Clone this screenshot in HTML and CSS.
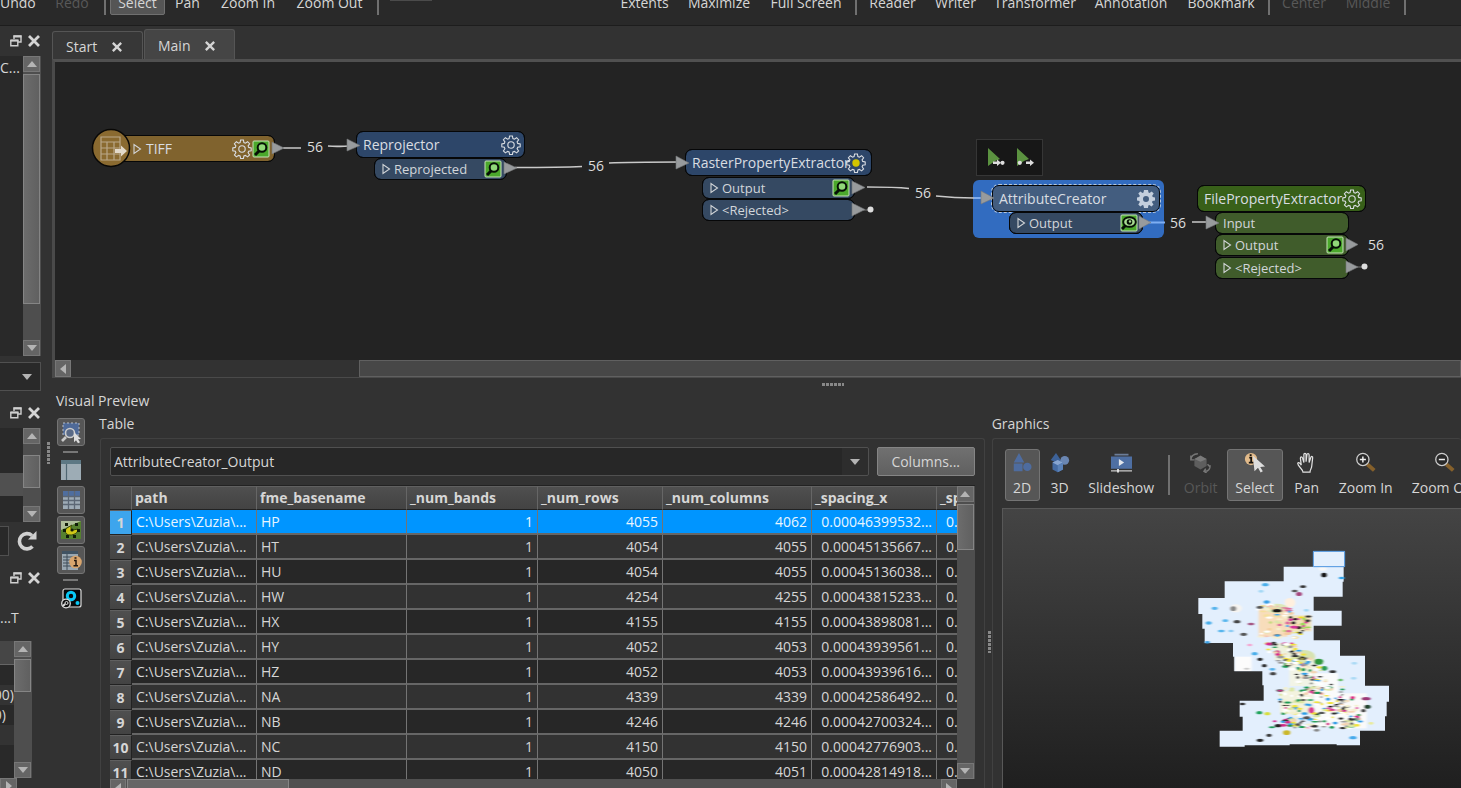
FILE: index.html
```html
<!DOCTYPE html>
<html lang="en">
<head>
<meta charset="utf-8">
<title>Workspace editor</title>
<link rel="stylesheet" href="styles.css">
</head>
<body>
<svg class="defs" aria-hidden="true">
  <defs>
    <symbol id="up" viewBox="0 0 10 6"><path d="M0 6 5 0l5 6z" fill="#b4b4b4"/></symbol>
    <symbol id="down" viewBox="0 0 10 6"><path d="M0 0h10L5 6z" fill="#b4b4b4"/></symbol>
    <symbol id="left" viewBox="0 0 6 10"><path d="M6 0v10L0 5z" fill="#b4b4b4"/></symbol>
    <symbol id="right" viewBox="0 0 6 10"><path d="M0 0v10l6-5z" fill="#b4b4b4"/></symbol>
    <symbol id="float" viewBox="0 0 12 12"><path d="M4 4V1h7v6H8" fill="none" stroke="#d0d0d0" stroke-width="1.400"/><path d="M3.500 1.500h8M.5 5.500h8" stroke="#d0d0d0" stroke-width="2"/><path d="M.8 5.500h7v5.200h-7z" fill="none" stroke="#d0d0d0" stroke-width="1.400"/></symbol>
    <symbol id="close" viewBox="0 0 12 12"><path d="m1 1 10 10M11 1 1 11" stroke="#d4d4d4" stroke-width="2.800"/></symbol>
    <symbol id="gear" viewBox="0 0 20 20"><path id="gearpath" d="M8.600 1h2.800l.5 2.600 1.500.6 2.200-1.500 2 2-1.500 2.200.6 1.500 2.500.5v2.800l-2.500.5-.6 1.500 1.500 2.200-2 2-2.200-1.500-1.500.6-.5 2.500H8.600l-.5-2.500-1.500-.6-2.200 1.500-2-2 1.500-2.200-.6-1.500-2.500-.5V8.900l2.500-.5.6-1.500-1.500-2.200 2-2 2.200 1.500 1.500-.6z" fill="none" stroke="currentColor" stroke-width="1.100"/><circle cx="10" cy="10" r="3.200" fill="none" stroke="currentColor" stroke-width="1.100"/></symbol>
    <symbol id="gearwarn" viewBox="0 0 20 20"><use href="#gearpath"/><circle cx="10" cy="10" r="3.700" fill="#d2c400"/></symbol>
    <symbol id="gearfull" viewBox="0 0 20 20"><path fill-rule="evenodd" fill="#c3cedd" d="M8 1h4l.5 2.500 1 .5 2.200-1.500 2 2-1.500 2.200.5 1.300L19 8.500v3l-2.500.5-.5 1.300 1.500 2.200-2 2-2.200-1.500-1 .5L12 19H8l-.5-2.500-1-.5-2.200 1.500-2-2L3.800 13l-.5-1L1 11.500v-3L3.300 8l.5-1.300L2.300 4.500l2-2L6.500 4l1-.5zM10 7a3 3 0 1 0 0 6 3 3 0 0 0 0-6"/></symbol>
    <symbol id="probe" viewBox="0 0 18 18"><rect x="1" y="1" width="16" height="16" rx="1" fill="#4ba82c" stroke="#c7e3b9"/><path d="M7.500 10.500 3 15" stroke="#061006" stroke-width="3"/><circle cx="10" cy="7.500" r="4.300" fill="#90d878" stroke="#061006" stroke-width="2"/></symbol>
    <symbol id="eye" viewBox="0 0 18 18"><rect x="1" y="1" width="16" height="16" rx="1" fill="#4ba82c" stroke="#c7e3b9"/><path d="m6 11-4 4" stroke="#061006" stroke-width="3"/><ellipse cx="9.500" cy="8" rx="6.300" ry="4.800" fill="#a8dd93" stroke="#061006" stroke-width="1.900"/><circle cx="9.500" cy="8" r="2.800" fill="#061006"/><circle cx="10" cy="7.500" r="1.200" fill="#a8dd93"/></symbol>
    <symbol id="expand" viewBox="0 0 9 12"><path d="M1 1.500v9L7.500 6z" fill="none" stroke="#d2d5d8" stroke-width="1.100"/></symbol>
  </defs>
</svg>

<nav class="topbar" aria-label="Main toolbar">
  <button>Undo</button><button disabled>Redo</button><i class="sep"></i>
  <button class="on">Select</button><button>Pan</button><button>Zoom In</button><button>Zoom Out</button><i class="sep"></i>
  <span class="stub"></span>
  <button>Extents</button><button>Maximize</button><button>Full Screen</button><i class="sep"></i>
  <button>Reader</button><button>Writer</button><button>Transformer</button><button>Annotation</button><button>Bookmark</button><i class="sep"></i>
  <button disabled>Center</button><button disabled>Middle</button><i class="sep"></i>
</nav>

<div class="shell">
  <aside class="dock">
    <div class="dockhead"><button aria-label="Float"><svg><use href="#float"/></svg></button><button aria-label="Close"><svg><use href="#close"/></svg></button></div>
    <div class="pane tree">
      <div class="panetext">C...</div>
      <div class="vbar"><button aria-label="Up"><svg><use href="#up"/></svg></button><div class="track"><i class="thumb tall"></i></div><button aria-label="Down"><svg><use href="#down"/></svg></button></div>
    </div>
    <button class="dockcombo" aria-label="Filter"><svg><use href="#down"/></svg></button>
    <div class="dockhead"><button aria-label="Float"><svg><use href="#float"/></svg></button><button aria-label="Close"><svg><use href="#close"/></svg></button></div>
    <div class="pane list">
      <div class="panetext"><i class="picked"></i></div>
      <div class="vbar"><button aria-label="Up"><svg><use href="#up"/></svg></button><div class="track lower"><i class="thumb short"></i></div><button aria-label="Down"><svg><use href="#down"/></svg></button></div>
    </div>
    <div class="search"><input aria-label="Search"><button aria-label="Refresh"><svg viewBox="0 0 22 22"><path d="M16.500 16.500A7.600 7.600 0 1 1 16 5.500" fill="none" stroke="#d0d0d0" stroke-width="3.600"/><path d="M20.500 1v8.500H12z" fill="#d0d0d0"/></svg></button></div>
    <div class="dockhead"><button aria-label="Float"><svg><use href="#float"/></svg></button><button aria-label="Close"><svg><use href="#close"/></svg></button></div>
    <div class="docklabel">...T</div>
    <div class="pane values">
      <div class="panetext"><b></b><span></span><span>00)</span><span class="inset">0)</span><span></span><span></span></div>
      <div class="vbar"><button aria-label="Up"><svg><use href="#up"/></svg></button><div class="track"><i class="thumb short"></i></div><button aria-label="Down"><svg><use href="#down"/></svg></button></div>
    </div>
    <div class="dockfoot"><button aria-label="Right"><svg><use href="#right"/></svg></button></div>
  </aside>
  <div class="vgrip"></div>

  <main class="work">
    <div class="tabs">
      <div class="tab"><button>Start</button><button class="x" aria-label="Close Start"><svg><use href="#close"/></svg></button></div>
      <div class="tab current"><button>Main</button><button class="x" aria-label="Close Main"><svg><use href="#close"/></svg></button></div>
    </div>
    <section class="editor">
      <div class="canvas">
        <div class="glow"></div>
        <svg class="wires" viewBox="0 0 1406 298" width="1406" height="298">
          <g fill="none" stroke="#c9c9c9" stroke-width="1.600">
            <path d="M228 86h18M273 84c10 1 16 0 22 0M460 105.500c30 0 46 0 67-1M554 101c20-1 45-1 70-1M812 125c16 0 28 0 42 1.500M881 134c14 1.500 28 2 38 2M1137 160h16"/>
          </g>
          <path d="M919 136h13M1094 160.500h16" stroke="#7eaef2" stroke-width="2"/>
          <path d="M808 148h9M1300 205h9" stroke="#777"/>
          <circle cx="815.500" cy="147.500" r="3" fill="#ddd"/><circle cx="1309.500" cy="204.500" r="3" fill="#ddd"/>
        </svg>
        <span class="count c1">56</span><span class="count c2">56</span><span class="count c3">56</span><span class="count c4">56</span><span class="count c5">56</span>

        <div class="node reader n1"><svg class="exp"><use href="#expand"/></svg><span>TIFF</span><button class="gear" aria-label="TIFF parameters"><svg><use href="#gear"/></svg></button><button class="probe" aria-label="Inspect"><svg><use href="#probe"/></svg></button></div>
        <svg class="disc" viewBox="0 0 40 40"><circle cx="20" cy="20" r="18.500" fill="#8a6a30" stroke="#090806" stroke-width="1.500"/><g fill="none" stroke="#b9a789" stroke-width="1.200"><path d="M10 9h19v23H10zM10 14h19M10 20h19M10 26h19M16 14v18M23 14v18"/></g><path d="M24 21h6v-3.500l6 5.500-6 5.500V25h-6z" fill="#e2d9ca"/></svg>

        <div class="node blue n2"><span>Reprojector</span><button class="gear" aria-label="Parameters"><svg><use href="#gear"/></svg></button></div>
        <div class="port blue p2"><svg class="exp"><use href="#expand"/></svg><span>Reprojected</span><button class="probe" aria-label="Inspect"><svg><use href="#probe"/></svg></button></div>

        <div class="node blue n3"><span>RasterPropertyExtractor</span><button class="gear" aria-label="Parameters"><svg><use href="#gearwarn"/></svg></button></div>
        <div class="port blue p3"><svg class="exp"><use href="#expand"/></svg><span>Output</span><button class="probe" aria-label="Inspect"><svg><use href="#probe"/></svg></button></div>
        <div class="port blue p3b"><svg class="exp"><use href="#expand"/></svg><span>&lt;Rejected&gt;</span></div>

        <div class="minibar">
          <button aria-label="Run to this"><svg viewBox="0 0 20 20"><path d="M1 0 13 11 8 13l-7 5z" fill="#5b9240"/><path d="M6 13.500h4v-2l4 3.300-4 3.200v-2H6z" fill="#ddd"/><circle cx="15.500" cy="14.800" r="2.100" fill="#ddd"/></svg></button>
          <button aria-label="Run from this"><svg viewBox="0 0 20 20"><path d="M1 0 13 11 8 13l-7 5z" fill="#5b9240"/><path d="M10 13.500h4v-2l4 3.300-4 3.200v-2h-4z" fill="#ddd"/><circle cx="3.800" cy="14.800" r="2.100" fill="#ddd"/></svg></button>
        </div>
        <div class="node chosen n4"><span>AttributeCreator</span><button class="gear" aria-label="Parameters"><svg><use href="#gearfull"/></svg></button></div>
        <div class="port blue p4"><svg class="exp"><use href="#expand"/></svg><span>Output</span><button class="probe" aria-label="Inspect"><svg><use href="#eye"/></svg></button></div>

        <div class="node green n5"><span>FilePropertyExtractor</span><button class="gear" aria-label="Parameters"><svg><use href="#gear"/></svg></button></div>
        <div class="port green p5"><span>Input</span></div>
        <div class="port green p5b"><svg class="exp"><use href="#expand"/></svg><span>Output</span><button class="probe" aria-label="Inspect"><svg><use href="#probe"/></svg></button></div>
        <div class="port green p5c"><svg class="exp"><use href="#expand"/></svg><span>&lt;Rejected&gt;</span></div>

        <svg class="wires" viewBox="0 0 1406 298" width="1406" height="298">
          <path fill="#989b9d" stroke="#77797b" stroke-width=".6" d="M217 80v12l12-6zM292 77v12l13-5.500zM449 100v12l13-6zM621 94v13l13-6zM797 119v13l13-6.500zM797 141v13l13-6.500zM926 129v13l13-6zM1084 154v13l12-6.500zM1151 154v13l13-6zM1291 176v13l12-6.500zM1291 199v12l12-6z"/>
        </svg>
      </div>
      <div class="hbar"><button aria-label="Left"><svg><use href="#left"/></svg></button><div class="track"><i></i></div></div>
    </section>
    <div class="hgrip"></div>

    <section class="preview">
      <h2>Visual Preview</h2>
      <div class="split">
        <div class="strip">
          <button class="on" aria-label="Inspect selection"><svg viewBox="0 0 24 24"><path d="M4 3h16v12H4z" fill="#4f6a98"/><path d="M4 3h16v12H4z" fill="none" stroke="#b7bdc6" stroke-dasharray="2 2"/><path d="m7 17-4 4" stroke="#c9c9c9" stroke-width="2.600"/><circle cx="11" cy="13" r="4.500" fill="#5a6a86" stroke="#ccc" stroke-width="1.600"/><path d="m15 12 7 7-3 .2 2 3-2 1-2-3-2 2z" fill="#ddd"/></svg></button>
          <i class="dash"></i>
          <button aria-label="Layout"><svg viewBox="0 0 24 24"><path d="M2 2h20v20H2z" fill="#9dacb5"/><path d="M2 2h20v4H2z" fill="#5d7884"/><path d="M7.500 6v16" stroke="#4f6672" stroke-width="1.200"/></svg></button>
          <button class="on" aria-label="Table view"><svg viewBox="0 0 24 24"><path d="M4 3h17v18H4z" fill="#9eabb6"/><path d="M4 3h17v5H4z" fill="#4f6e9f"/><path d="M4 8.500h17M4 12.500h17M4 16.500h17M9.500 3v18M15.500 3v18" stroke="#5c6775" stroke-width="1.300"/></svg></button>
          <button class="on" aria-label="Graphics view"><svg viewBox="0 0 24 24"><path d="M2 3h20v18H2z" fill="#55802f"/><path d="M2 3h20L2 12z" fill="#aebd9b"/><path d="M13 7c-2 2-1 5 1 5l5-1c0 4-4 6-8 6-5 0-6-5-3-7z" fill="#d0c818" stroke="#39470c"/><circle cx="13" cy="12" r="1.600" fill="#101c09"/><path d="M6 5h3v3H6zM16 5h3v3h-3zM4 11h3v3H4zM18 11h3v3h-3zM7 17h3v3H7zM14 17h3v3h-3z" fill="#101c09"/></svg></button>
          <button class="on" aria-label="Feature information"><svg viewBox="0 0 24 24"><path d="M3 3h16v19H3z" fill="#9aa8b2"/><path d="M3 3h16v3H3z" fill="#405363"/><path d="M4 9h14M4 12h14M4 15h14M4 18h14M8 6v16" stroke="#3e4d58"/><circle cx="16.500" cy="14" r="6.300" fill="#d9a66e"/><path d="M15 12.500h2v5M14.500 17.800h4.500M15.500 10h2" stroke="#231811" stroke-width="1.500" fill="none"/></svg></button>
          <i class="dash"></i>
          <button aria-label="Data Inspector"><svg viewBox="0 0 24 24"><rect x="4" y="3" width="18" height="18" rx="2" fill="#07090a" stroke="#ddd" stroke-width="1.200"/><circle cx="12" cy="10" r="3.700" fill="none" stroke="#08c8f5" stroke-width="3"/><circle cx="18.500" cy="17" r="2" fill="#08c8f5"/><circle cx="7" cy="17.500" r="4.300" fill="#111" stroke="#ddd" stroke-width="1.300"/><path d="m4 20 2-2" stroke="#ddd" stroke-width="2"/><circle cx="7.500" cy="17" r="1.500" fill="none" stroke="#ddd"/></svg></button>
        </div>

        <section class="group tablegroup">
          <h3>Table</h3>
          <div class="frame">
            <div class="picker">
              <div class="combo"><select aria-label="Table source"><option>AttributeCreator_Output</option></select><svg><use href="#down"/></svg></div>
              <button class="push">Columns...</button>
            </div>
            <div class="gridwrap">
              <div class="clip">
              <table>
                <colgroup><col class="k0"><col class="k1"><col class="k2"><col class="k3"><col class="k4"><col class="k5"><col class="k6"><col class="k7"></colgroup>
                <thead><tr><th></th><th>path</th><th>fme_basename</th><th>_num_bands</th><th>_num_rows</th><th>_num_columns</th><th>_spacing_x</th><th>_spacing_y</th></tr></thead>
                <tbody>
                <tr class="sel"><th>1</th><td>C:\Users\Zuzia\...</td><td>HP</td><td>1</td><td>4055</td><td>4062</td><td>0.00046399532...</td><td>0.</td></tr>
                <tr><th>2</th><td>C:\Users\Zuzia\...</td><td>HT</td><td>1</td><td>4054</td><td>4055</td><td>0.00045135667...</td><td>0.</td></tr>
                <tr><th>3</th><td>C:\Users\Zuzia\...</td><td>HU</td><td>1</td><td>4054</td><td>4055</td><td>0.00045136038...</td><td>0.</td></tr>
                <tr><th>4</th><td>C:\Users\Zuzia\...</td><td>HW</td><td>1</td><td>4254</td><td>4255</td><td>0.00043815233...</td><td>0.</td></tr>
                <tr><th>5</th><td>C:\Users\Zuzia\...</td><td>HX</td><td>1</td><td>4155</td><td>4155</td><td>0.00043898081...</td><td>0.</td></tr>
                <tr><th>6</th><td>C:\Users\Zuzia\...</td><td>HY</td><td>1</td><td>4052</td><td>4053</td><td>0.00043939561...</td><td>0.</td></tr>
                <tr><th>7</th><td>C:\Users\Zuzia\...</td><td>HZ</td><td>1</td><td>4052</td><td>4053</td><td>0.00043939616...</td><td>0.</td></tr>
                <tr><th>8</th><td>C:\Users\Zuzia\...</td><td>NA</td><td>1</td><td>4339</td><td>4339</td><td>0.00042586492...</td><td>0.</td></tr>
                <tr><th>9</th><td>C:\Users\Zuzia\...</td><td>NB</td><td>1</td><td>4246</td><td>4246</td><td>0.00042700324...</td><td>0.</td></tr>
                <tr><th>10</th><td>C:\Users\Zuzia\...</td><td>NC</td><td>1</td><td>4150</td><td>4150</td><td>0.00042776903...</td><td>0.</td></tr>
                <tr><th>11</th><td>C:\Users\Zuzia\...</td><td>ND</td><td>1</td><td>4050</td><td>4051</td><td>0.00042814918...</td><td>0.</td></tr>
                </tbody>
              </table>
              </div>
              <div class="vbar"><button aria-label="Up"><svg><use href="#up"/></svg></button><div class="track"><i class="thumb mid"></i></div><button aria-label="Down"><svg><use href="#down"/></svg></button></div>
            </div>
            <div class="hbar low"><button aria-label="Left"><svg><use href="#left"/></svg></button><div class="track"><i></i></div><button aria-label="Right"><svg><use href="#right"/></svg></button></div>
          </div>
        </section>
        <div class="vgrip between"></div>

        <section class="group graphics">
          <h3>Graphics</h3>
          <div class="frame">
            <div class="gtools">
              <button class="on"><svg viewBox="0 0 24 24"><path d="M8 1 14 12H2zM2 13h10v9H2z" fill="#4e6c9f"/><circle cx="17.500" cy="17" r="4.800" fill="#4e6c9f"/></svg><span>2D</span></button>
              <button><svg viewBox="0 0 24 24"><path d="m8 1 6 9-6 2-6-3z" fill="#3d6299"/><circle cx="18" cy="9.500" r="5" fill="#6a86b2"/><path d="m4 12 6-3 6 3v8l-6 3-6-3z" fill="#456ba3"/><path d="m4 12 6 3 6-3-6-3z" fill="#88a5d0"/><path d="M10 15v8l6-3v-8z" fill="#5b82b8"/></svg><span>3D</span></button>
              <button><svg viewBox="0 0 24 24"><path d="M4 2h16v2H4z" fill="#6b7d99"/><path d="M0 5h24v14H0z" fill="#4e6fa3"/><path d="m9 8 6 4-6 4z" fill="#e2e6ec"/><path d="M0 21.500h24" stroke="#ccc" stroke-width="1.400"/><path d="M7 19.500h2v4H7z" fill="#eee"/></svg><span>Slideshow</span></button>
              <i class="sep"></i>
              <button disabled><svg viewBox="0 0 24 24"><path d="m12 5 7 3v8l-7 4-7-4V8z" fill="#5e5e5e"/><path d="m5 8 7 3 7-3-7-4z" fill="#7b7b7b"/><path d="M1 9c0-4 3-7 8-7M1 4v5h4M23 15c0 4-2 7-6 7M23 17l-3-3M18 19l-2 3 3 2" fill="none" stroke="#777" stroke-width="1.700"/></svg><span>Orbit</span></button>
              <button class="on"><svg viewBox="0 0 24 24"><circle cx="8" cy="8" r="7" fill="#e1ba8a"/><path d="M6 6.500h2.200v5.500M5.500 12.200h5.500M6.500 3.500h2.200" stroke="#15110d" stroke-width="2" fill="none"/><path d="m10 4 14 12.500-5.500.5 3 5-2.500 1.500-3-5.500-4 4z" fill="#ddd"/></svg><span>Select</span></button>
              <button><svg viewBox="0 0 24 24"><path d="M8 23c0-3-6-7-6-10 1-2 3 0 4 2L5 7c0-2 2-2 2.500 0L9 12V3c0-2 2.500-2 2.500 0v8l1-8c.5-2 2.500-1.500 2.500.5V12l2-6c.5-1.500 2.500-1 2 1l-1 9c0 3-2 4-2 7z" fill="#353535" stroke="#e1e1e1" stroke-width="1.400"/></svg><span>Pan</span></button>
              <button><svg viewBox="0 0 24 24"><path d="m14 14 8 7" stroke="#85602b" stroke-width="4.500"/><circle cx="9" cy="8.500" r="7" fill="#292929" stroke="#ccc" stroke-width="1.500"/><path d="M5.500 8.500h7M9 5v7" stroke="#eee" stroke-width="1.700"/></svg><span>Zoom In</span></button>
              <button><svg viewBox="0 0 24 24"><path d="m14 14 8 7" stroke="#85602b" stroke-width="4.500"/><circle cx="9" cy="8.500" r="7" fill="#292929" stroke="#ccc" stroke-width="1.500"/><path d="M5.500 8.500h7" stroke="#eee" stroke-width="1.700"/></svg><span>Zoom Out</span></button>
            </div>
            <div class="view">
              <svg class="map" viewBox="0 0 690 660" role="img" aria-label="Raster tiles of Great Britain">
                <defs><filter id="soft"><feGaussianBlur stdDeviation="2.800 1.600"/></filter></defs>
                <path d="M399 34h95v46h-3v45h-3v45h-87v42h84v45h-84v44h79v46h75v90h72v48h-7v44h-5v43h-75v44h-70v-3H329v3H194v4h-75v-48h69v-42h-9v-48h72v-46h-4v-42h-84v-44h-4v-41H74v-43h-7v-44H55v-48h79v-50h177V80h88z" fill="#e3effd"/>
                <g id="spots" filter="url(#soft)"></g>
                <path d="M400 34h94v46h-94z" fill="#e3effd" stroke="#4b93df" stroke-width="3"/>
              </svg>
            </div>
          </div>
        </section>
      </div>
    </section>
  </main>
</div>
<script src="map.js"></script>
</body>
</html>
```
FILE: styles.css
```css
* { box-sizing: border-box; }
html, body { height: 100%; }
body { margin: 0; overflow: hidden; display: flex; flex-direction: column; background: #323232; color: #d6d6d6; font: 14px/20px "Open Sans", "Noto Sans", sans-serif; }
button, input, select { font: inherit; color: inherit; background: none; border: 0; padding: 0; margin: 0; }
button { white-space: nowrap; }
svg { display: block; }
h2, h3 { font-size: 14px; font-weight: 400; line-height: 20px; margin: 0; }
.defs { position: absolute; width: 0; height: 0; }

.topbar { flex: none; height: 26px; overflow: hidden; display: grid; grid-template-columns: 45px 54px 11px 55px 45px 76px 87px 10px 228px 67px 82px 92px 8px 65px 61px 98px 94px 86px 9px 62px 66px 8px; grid-template-rows: 15px; align-items: end; background: #292929; border-bottom: 1px solid #1d1d1d; }
.topbar button { height: 24px; line-height: 20px; padding-bottom: 2px; display: flex; justify-content: center; align-items: flex-end; }
.topbar button:first-child { justify-content: flex-start; }
.topbar button:disabled, .gtools button:disabled { color: #585858; }
.topbar .on { background: #555; border: 1px solid #707070; border-radius: 2px; padding-bottom: 1px; }
.sep { justify-self: center; width: 2px; height: 40px; background: #707070; }
.stub { align-self: start; width: 42px; height: 1px; margin-left: 7px; background: #4b4b4b; }

.shell { flex: 1; min-height: 0; display: flex; }
.dock { flex: none; width: 41px; display: flex; flex-direction: column; overflow: hidden; }
.dockhead { height: 30px; flex: none; display: flex; align-items: center; justify-content: flex-end; gap: 6px; padding-right: 1px; }
.dockhead svg { width: 12px; height: 12px; }
.pane { flex: none; display: flex; background: #292929; }
.panetext { flex: 1; min-width: 0; overflow: hidden; white-space: nowrap; }
.tree { height: 300px; }
.tree .panetext { padding-top: 2px; }
.list { height: 94px; margin-bottom: 4px; }
.picked { display: block; height: 23px; margin-top: 45px; background: #505050; }
.vbar { flex: none; width: 18px; display: flex; flex-direction: column; background: #4e4e4e; }
.vbar button, .hbar button, .dockfoot button { flex: none; width: 17px; height: 16px; display: grid; place-items: center; background: #656565; border: 1px solid #777; }
.vbar svg, .dockcombo svg, .combo svg { width: 10px; height: 6px; }
.track { flex: 1; min-width: 0; min-height: 0; }
.vbar .track { padding-top: 2px; }
.vbar .lower { padding-top: 11px; }
.thumb { display: block; width: 17px; border: 1px solid #858585; background: linear-gradient(90deg, #6c6c6c, #606060); }
.tall { height: 230px; }
.short { height: 33px; }
.mid { height: 46px; }
.dockcombo { flex: none; height: 29px; margin: 6px 0 7px; padding-right: 8px; display: flex; align-items: center; justify-content: flex-end; background: #292929; border: 1px solid #505050; border-left: 0; }
.search { flex: none; display: flex; gap: 7px; height: 30px; margin-bottom: 7px; }
.search input { width: 9px; border: 1px solid #505050; border-left: 0; background: #292929; }
.search svg { width: 22px; height: 22px; }
.docklabel { flex: none; height: 48px; padding-top: 15px; }
.values { height: 137px; width: 32px; }
.values .panetext b { display: block; height: 24px; background: #464646; border-bottom: 1px solid #666; }
.values .panetext span { display: flex; justify-content: flex-end; height: 20px; }
.values .panetext span:nth-of-type(even) { background: #333; }
.values .panetext .inset { padding-right: 8px; }
.dockfoot { flex: 1; }
.dockfoot svg, .hbar svg { width: 6px; height: 10px; }
.vgrip { flex: none; width: 11px; padding: 416px 4px 0 6px; }
.vgrip::before, .hgrip::before { content: ""; display: block; width: 3px; height: 22px; background: repeating-linear-gradient(#888 0 3px, #323232 3px 4px); }

.work { flex: 1; min-width: 0; display: flex; flex-direction: column; }
.tabs { flex: none; height: 33px; display: flex; align-items: flex-end; gap: 1px; }
.tab { height: 28px; width: 91px; display: flex; align-items: center; justify-content: space-between; padding: 2px 20px 0 13px; border: 1px solid #555; border-bottom: 0; border-radius: 3px 3px 0 0; background: #373737; }
.current { height: 30px; background: #454545; padding-right: 19px; }
.tab svg { width: 10px; height: 10px; }
.editor { flex: none; overflow: hidden; border: 3px solid #4a4a4a; border-top-color: #505050; border-right: 0; border-bottom: 1px solid #4a4a4a; }
.canvas { position: relative; height: 298px; overflow: hidden; background: #232323; }
.wires { position: absolute; left: 0; top: 0; pointer-events: none; }
.hbar { display: flex; height: 17px; background: #323232; }
.hbar button { width: 16px; height: 17px; }
.hbar .track { padding-left: 288px; }
.hbar .track i { display: block; height: 17px; background: #474747; border: 1px solid #606060; }
.hgrip { flex: none; height: 13px; display: flex; justify-content: center; padding: 5px 0 0 153px; }
.hgrip::before { width: 22px; height: 3px; background: repeating-linear-gradient(90deg, #888 0 3px, #323232 3px 4px); }

.node, .port { position: absolute; display: flex; align-items: center; gap: 5px; border: 1px solid #060708; outline: 1px solid #060708; outline-offset: -1px; color: #d9dde2; white-space: nowrap; }
.node { height: 27px; border-radius: 7px; padding: 0 3px 0 6px; }
.port { height: 22px; border-radius: 7px; padding: 0 4px 0 7px; gap: 3px; font-size: 13px; color: #d2d6da; }
.node span, .port span { flex: 1; min-width: 0; }
.node.blue { background: #2d4669; }
.port.blue { background: #354962; }
.node.green { background: #386019; }
.port.green { background: #405c2b; }
.reader { background: #80632e; }
.chosen { background: #435d7f; outline: 1px dashed #b7c7da; outline-offset: 0; }
.exp { width: 9px; height: 12px; }
.gear svg { width: 20px; height: 20px; }
.probe svg { width: 18px; height: 18px; }
.disc { position: absolute; left: 36px; top: 66px; width: 40px; height: 40px; }
.n1 { left: 60px; top: 73px; width: 160px; padding-left: 17px; padding-right: 4px; gap: 4px; }
.n1 .gear { margin-right: -4px; }
.n2 { left: 301px; top: 69px; width: 169px; }
.p2 { left: 319px; top: 96px; width: 133px; }
.n3 { left: 630px; top: 87px; width: 187px; gap: 0; }
.p3, .p3b { left: 647px; width: 153px; }
.p3 { top: 115px; }
.p3b { top: 137px; }
.glow { position: absolute; left: 918px; top: 118px; width: 191px; height: 58px; border-radius: 6px; background: #326cc0; }
.n4 { left: 937px; top: 123px; width: 168px; }
.p4 { left: 954px; top: 150px; width: 134px; }
.n5 { left: 1142px; top: 123px; width: 169px; gap: 0; }
.p5, .p5b, .p5c { left: 1160px; width: 134px; }
.p5 { top: 150px; }
.p5b { top: 172px; }
.p5c { top: 195px; }
.n3 { padding-right: 5px; }
.count { position: absolute; line-height: 20px; color: #ddd; }
.c1 { left: 252px; top: 75px; }
.c2 { left: 533px; top: 94px; }
.c3 { left: 860px; top: 121px; }
.c4 { left: 1115px; top: 151px; }
.c5 { left: 1313px; top: 173px; }
.minibar { position: absolute; left: 921px; top: 77px; width: 67px; height: 37px; display: flex; align-items: center; gap: 9px; padding-left: 10px; background: #171717; border: 1px solid #363636; }
.minibar svg { width: 20px; height: 20px; }

.preview { flex: 1; min-height: 0; display: flex; flex-direction: column; }
.preview h2 { padding-left: 4px; }
.split { flex: 1; min-height: 0; display: flex; }
.strip { flex: none; width: 47px; padding: 7px 0 0 5px; display: flex; flex-direction: column; gap: 2px; }
.strip button { flex: none; width: 28px; height: 28px; display: grid; place-items: center; border: 1px solid transparent; border-radius: 3px; }
.strip .on, .gtools .on { background: #565656; border-color: #747474; }
.strip svg { width: 24px; height: 24px; }
.dash { width: 15px; height: 2px; margin: 3px 0 1px 6px; background: #777; }
.group { min-width: 0; display: flex; flex-direction: column; }
.group h3 { height: 27px; padding-top: 3px; }
.group .frame { flex: 1; min-height: 0; display: flex; flex-direction: column; border: 1px solid #414141; border-bottom: 0; border-radius: 3px 3px 0 0; }
.tablegroup { flex: 1774; flex-basis: 0; }
.tablegroup .frame { margin-left: 1px; padding: 8px 9px 0; }
.picker { flex: none; display: flex; gap: 8px; margin-bottom: 9px; }
.combo { flex: 1; position: relative; display: flex; }
.combo select { appearance: none; width: 100%; height: 29px; padding-left: 3px; background: linear-gradient(90deg, #272727 calc(100% - 26px), #2d2d2d 0); border: 1px solid #505050; border-radius: 2px; }
.combo svg { position: absolute; right: 9px; top: 12px; pointer-events: none; }
.push { width: 98px; height: 29px; border: 1px solid #858585; border-radius: 2px; background: linear-gradient(#707070, #606060); }
.gridwrap { flex: 1; min-height: 0; display: flex; border-top: 1px solid #222; }
.clip { flex: 1; min-width: 0; overflow: hidden; }
table { width: 952px; table-layout: fixed; border-collapse: separate; border-spacing: 0; }
.k0 { width: 22px; } .k1, .k4, .k6, .k7 { width: 125px; } .k2 { width: 150px; } .k3 { width: 131px; } .k5 { width: 149px; }
th, td { height: 25px; padding: 0 4px 2px; line-height: 20px; text-align: left; white-space: nowrap; overflow: hidden; }
td { border-right: 1px solid #747474; border-bottom: 2px solid #666; padding-bottom: 0; }
th { background: linear-gradient(#4f4f4f, #434343); border-right: 1px solid #666; border-top: 1px solid #606060; border-bottom: 1px solid #222; }
thead th { height: 24px; padding: 0 3px; }
tbody th { padding: 0; text-align: center; border-right-color: #222; }
tbody td { background: #323232; }
tbody tr:nth-child(odd) td { background: #272727; }
td:nth-child(n+4) { text-align: right; }
td:nth-child(8) { text-align: left; padding-left: 9px; }
tbody .sel td, tbody tr.sel:nth-child(odd) td { background: #0095ff; color: #e8f5ff; }
.sel th { background: #3da5ed; }
.low { flex: none; height: 9px; overflow: hidden; background: #505050; margin-right: 18px; }
.low .track { padding-left: 1px; }
.low .track i { width: 162px; background: #666; border-color: #858585; }
.between { width: 7px; padding: 220px 1px 0 3px; }
.graphics { flex: 940; flex-basis: 0; overflow: hidden; }
.graphics .frame { border-right: 0; padding: 10px 0 0 9px; overflow: hidden; }
.gtools { flex: none; display: grid; grid-template-columns: 35px 40px 83px 12px 52px 56px 48px 70px 88px; margin: 0 0 7px 3px; align-items: center; }
.gtools button { height: 52px; display: flex; flex-direction: column; align-items: center; gap: 5px; border: 1px solid transparent; border-radius: 3px; padding-top: 2px; }
.gtools svg { width: 21px; height: 21px; }
.view { flex: 1; min-height: 0; overflow: hidden; padding: 31px 0 0 177px; border: 1px solid #585858; border-right: 0; border-bottom: 0; background: linear-gradient(#444, #1f1f1f); }
.map { width: 230px; height: 220px; }
```
FILE: map.js
```js
const group = document.getElementById('spots');
const ns = 'http://www.w3.org/2000/svg';
const spot = (x, y, rx, ry, fill) => {
  const e = document.createElementNS(ns, 'ellipse');
  e.setAttribute('cx', x); e.setAttribute('cy', y);
  e.setAttribute('rx', rx); e.setAttribute('ry', ry);
  e.setAttribute('fill', fill);
  group.appendChild(e);
};
const rect = (x, y, w, h, fill) => {
  const e = document.createElementNS(ns, 'rect');
  e.setAttribute('x', x); e.setAttribute('y', y);
  e.setAttribute('width', w); e.setAttribute('height', h);
  e.setAttribute('fill', fill);
  group.appendChild(e);
};

let seed = 41;
const rnd = () => (seed = (seed * 16807) % 2147483647) / 2147483647;
const pick = a => a[Math.floor(rnd() * a.length)];

rect(236, 208, 86, 82, '#f8ddbb');
rect(322, 226, 72, 48, '#f3e3bd');
rect(165, 350, 50, 43, '#fcfcfc');
rect(284, 310, 60, 50, '#eef2dd');
rect(328, 362, 76, 76, '#f2f4e6');
rect(404, 400, 70, 160, '#fafbfb');
rect(300, 452, 100, 70, '#f3f3df');
rect(470, 460, 90, 105, '#fafafa');
spot(290, 205, 34, 14, '#dde8b8');
spot(372, 350, 34, 20, '#d7e3b1');
spot(330, 188, 16, 14, '#fff0df');
spot(428, 86, 12, 6, '#f8f8f8');
spot(168, 205, 18, 12, '#f6f4f1');

const warm = ['#f5cfa3', '#f4df9c', '#dbe6aa', '#f3c3b4', '#f7efcf', '#fff'];
const inks = ['#1d1d1d', '#333', '#555', '#d62a8c', '#1a9a54', '#2c9fe6', '#f0e33a', '#fff', '#fff', '#f4d3b2', '#f3f0cf', '#999', '#dce7a4'];
const scatter = (n, x, y, w, h, slope, colours) => {
  for (let i = 0; i < n; i++) {
    const v = rnd();
    spot(x + rnd() * w + v * slope, y + v * h, 5 + rnd() * 7, 2 + rnd() * 2.4, pick(colours));
  }
};
scatter(50, 228, 195, 110, 100, 15, warm);
scatter(14, 236, 200, 90, 90, 15, ['#555', '#de6b9c', '#3ca6e8', '#c2da79']);
scatter(26, 325, 228, 66, 54, -4, ['#1d1d1d', '#333', '#f0df22', '#d6319a', '#9dda55', '#f5cb9f', '#eaa']);
scatter(60, 240, 305, 100, 75, 60, inks);
scatter(80, 315, 355, 100, 95, 55, inks);
scatter(150, 290, 440, 200, 125, 25, inks);
scatter(45, 475, 475, 60, 90, 8, inks);
scatter(20, 275, 540, 130, 25, 0, inks);

[[432,105,8,7,'#111'],[485,114,9,4,'#2c9fe6'],[256,134,10,5,'#48aeea'],[243,154,8,4,'#a2d7f5'],
 [369,140,9,4,'#333'],[344,153,9,4,'#555'],[357,162,9,6,'#a4457c'],[260,186,9,5,'#389fe5'],
 [104,205,9,5,'#53b2ec'],[86,249,9,5,'#48aeea'],[136,242,9,4,'#57b5ed'],[124,273,10,4,'#57b5ed'],
 [153,273,8,4,'#8bcbf3'],[82,307,8,4,'#389fe5'],[171,245,10,5,'#444'],[160,206,9,7,'#888'],
 [191,283,10,5,'#555'],[213,252,10,4,'#a45783'],[291,212,15,5,'#171717'],[379,211,8,4,'#a3d7f5'],
 [224,341,9,5,'#48aeea'],[209,315,8,4,'#f4a8d2'],[240,358,8,5,'#222'],[253,377,7,5,'#222'],
 [279,401,9,5,'#444'],[277,388,9,4,'#54b1ec'],[200,386,9,3,'#ccc'],[523,370,9,4,'#abdaf5'],
 [521,415,9,4,'#abdaf5'],[187,492,9,4,'#333'],[238,518,9,5,'#1fa258'],[262,521,9,5,'#d7de3c'],
 [240,601,10,5,'#222'],[519,593,11,5,'#45a9eb'],[294,557,10,5,'#222'],[416,365,14,9,'#2f973e'],
 [433,385,9,7,'#259a52'],[558,476,14,5,'#9b3777'],[562,500,10,6,'#20442e'],[550,512,8,5,'#444'],
 [518,473,8,4,'#df2786'],[573,550,8,4,'#e9eb9b'],[394,511,9,9,'#d9388d'],[320,578,11,7,'#cbb72c'],
 [267,586,8,5,'#333'],[458,395,10,4,'#333'],[481,420,8,4,'#6bbd69'],[410,571,9,4,'#888']
].forEach(s => spot(...s));
```
